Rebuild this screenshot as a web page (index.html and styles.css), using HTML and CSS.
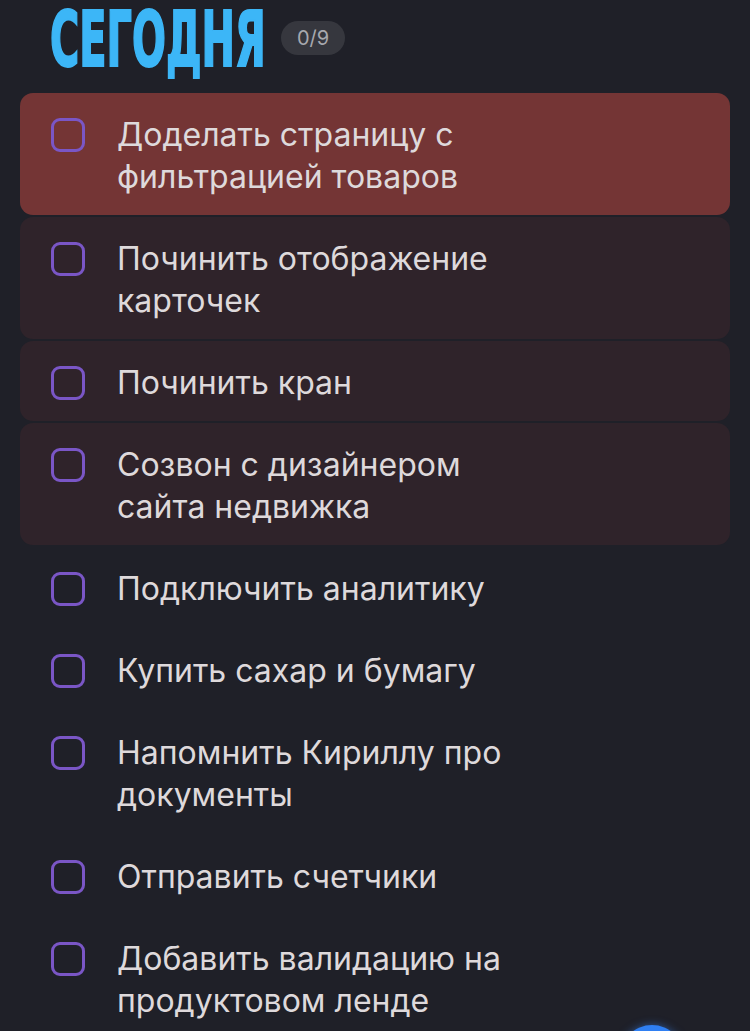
FILE: index.html
```html
<!DOCTYPE html>
<html lang="ru">
<head>
<meta charset="utf-8">
<link rel="stylesheet" href="styles.css">
</head>
<body>
<div class="page">
  <header class="head">
    <h1 class="title"><span class="title-text">СЕГОДНЯ</span></h1>
    <span class="badge">0/9</span>
  </header>
  <ul class="list">
    <li class="item item--urgent"><span class="box"></span><span class="text">Доделать страницу с<br>фильтрацией товаров</span></li>
    <li class="item item--warm"><span class="box"></span><span class="text">Починить отображение<br>карточек</span></li>
    <li class="item item--warm"><span class="box"></span><span class="text">Починить кран</span></li>
    <li class="item item--warm"><span class="box"></span><span class="text">Созвон с дизайнером<br>сайта недвижка</span></li>
    <li class="item"><span class="box"></span><span class="text">Подключить аналитику</span></li>
    <li class="item"><span class="box"></span><span class="text">Купить сахар и бумагу</span></li>
    <li class="item"><span class="box"></span><span class="text">Напомнить Кириллу про<br>документы</span></li>
    <li class="item"><span class="box"></span><span class="text">Отправить счетчики</span></li>
    <li class="item"><span class="box"></span><span class="text">Добавить валидацию на<br>продуктовом ленде</span></li>
  </ul>
  <div class="fab"></div>
</div>
</body>
</html>
```

FILE: styles.css
```css
html, body {
  margin: 0;
  padding: 0;
  background: #1f2028;
}
body {
  font-family: Inter, "Noto Sans", "DejaVu Sans", sans-serif;
  overflow: hidden;
}
.page {
  position: relative;
  width: 750px;
  height: 1031px;
  overflow: hidden;
}
.head {
  display: flex;
  align-items: flex-start;
  padding: 0 0 0 50px;
  height: 82px;
}
.title {
  margin: 1px 0 0 0;
  width: 212px;
  height: 78px;
  font-family: "DejaVu Sans Condensed", "Liberation Sans", sans-serif;
  font-weight: 700;
  font-size: 76px;
  line-height: 78px;
  color: #3cb6f7;
  white-space: nowrap;
}
.title-text {
  display: inline-block;
  -webkit-text-stroke: 2px #3cb6f7;
  transform: scaleX(0.584);
  transform-origin: left center;
}
.badge {
  display: inline-block;
  background: #36373e;
  color: #a7a8ae;
  font-size: 20px;
  line-height: 34px;
  padding: 0 16px;
  border-radius: 17px;
  margin: 21px 0 0 19px;
}
.list {
  list-style: none;
  margin: 11px 20px 0;
  padding: 0;
  display: flex;
  flex-direction: column;
  gap: 2px;
}
.item {
  display: flex;
  align-items: flex-start;
  gap: 32px;
  padding: 20.5px 30px 17.5px 31px;
  border-radius: 13px;
}
.item--urgent { background: #743535; }
.item--warm { background: #2f232a; }
.box {
  flex: none;
  width: 34px;
  height: 34px;
  box-sizing: border-box;
  border: 3px solid #7a56c6;
  border-radius: 9px;
  margin-top: 4px;
}
.text {
  color: #ded9db;
  font-size: 32px;
  line-height: 42px;
}
.fab {
  position: absolute;
  left: 620px;
  top: 1025px;
  width: 64px;
  height: 64px;
  border-radius: 50%;
  background: #2f7ff2;
  box-shadow: 0 0 8px rgba(60, 140, 255, 0.5);
}
```
